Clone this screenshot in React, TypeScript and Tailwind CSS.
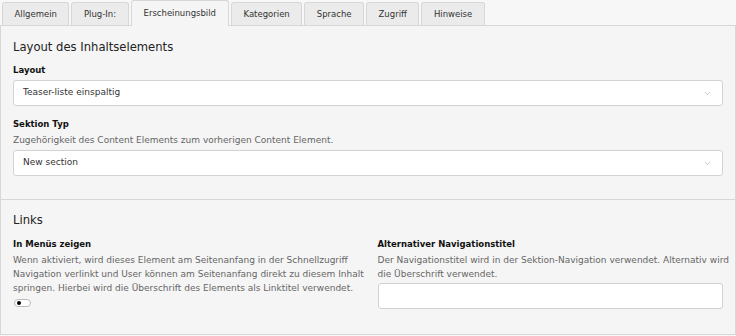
import { ChevronDown } from "lucide-react";

const tabs = [
  "Allgemein",
  "Plug-In:",
  "Erscheinungsbild",
  "Kategorien",
  "Sprache",
  "Zugriff",
  "Hinweise",
];

function SelectBox({ value }: { value: string }) {
  return (
    <div className="flex h-[26px] items-center justify-between rounded-[3px] border border-[#d2d2d2] bg-white pl-[9px] pr-[10px] text-[9px] text-[#333]">
      <span>{value}</span>
      <ChevronDown size={9} strokeWidth={1.5} className="text-[#999]" />
    </div>
  );
}

// lines are broken as in the reference
function Help({ lines }: { lines: string[] }) {
  return (
    <div className="mt-[2px] text-[9px] leading-[14px] text-[#666]">
      {lines.map((l) => (
        <div key={l} className="whitespace-nowrap">
          {l}
        </div>
      ))}
    </div>
  );
}

export default function App() {
  return (
    <div
      className="h-[336px] w-[736px] bg-[#f7f7f7] text-[#333]"
      style={{ fontFamily: "'DejaVu Sans', Verdana, sans-serif" }}
    >
      {/* Tabs */}
      <div className="flex h-[25px] items-end gap-[2px] pl-[2px]">
        {tabs.map((t) => {
          const active = t === "Erscheinungsbild";
          return (
            <div
              key={t}
              className={
                active
                  ? "relative -mb-px flex h-[26px] items-center rounded-t-[3px] border border-b-0 border-[#d7d7d7] bg-[#f5f5f5] px-[12px] text-[8.5px] text-[#333]"
                  : "flex h-[23px] items-center rounded-t-[3px] border border-b-0 border-[#d7d7d7] bg-[#ebebeb] px-[11.5px] text-[8.5px] text-[#333]"
              }
            >
              {t}
            </div>
          );
        })}
      </div>

      {/* Panel */}
      <div className="h-[310px] border border-[#d7d7d7] bg-[#f5f5f5]">
        <div className="border-b border-[#d7d7d7] px-[12px] pb-[23px] pt-[12px]">
          <h2 className="text-[11.6px] leading-[18px] text-[#222]">Layout des Inhaltselements</h2>

          <div className="mt-[7px] text-[8.5px] font-bold leading-[14px] text-[#111]">Layout</div>
          <div className="mt-[3px]">
            <SelectBox value="Teaser-liste einspaltig" />
          </div>

          <div className="mt-[11px] text-[8.5px] font-bold leading-[14px] text-[#111]">Sektion Typ</div>
          <Help lines={["Zugehörigkeit des Content Elements zum vorherigen Content Element."]} />
          <div className="mt-[3px]">
            <SelectBox value="New section" />
          </div>
        </div>

        <div className="px-[12px] pt-[11px]">
          <h2 className="text-[11.6px] leading-[18px] text-[#222]">Links</h2>
          <div className="mt-[8px] grid grid-cols-2 gap-x-[19px]">
            <div>
              <div className="text-[8.5px] font-bold leading-[14px] text-[#111]">In Menüs zeigen</div>
              <Help
                lines={[
                  "Wenn aktiviert, wird dieses Element am Seitenanfang in der Schnellzugriff",
                  "Navigation verlinkt und User können am Seitenanfang direkt zu diesem Inhalt",
                  "springen. Hierbei wird die Überschrift des Elements als Linktitel verwendet.",
                ]}
              />
              <div className="ml-[1px] mt-[4px] flex h-[8px] w-[17px] items-center rounded-full border border-[#bbb] bg-white px-[2px]">
                <div className="h-[4px] w-[4px] rounded-full bg-black" />
              </div>
            </div>
            <div>
              <div className="text-[8.5px] font-bold leading-[14px] text-[#111]">Alternativer Navigationstitel</div>
              <Help
                lines={[
                  "Der Navigationstitel wird in der Sektion-Navigation verwendet. Alternativ wird",
                  "die Überschrift verwendet.",
                ]}
              />
              <div className="mt-[2px] h-[26px] rounded-[3px] border border-[#d2d2d2] bg-white" />
            </div>
          </div>
        </div>
      </div>
    </div>
  );
}
